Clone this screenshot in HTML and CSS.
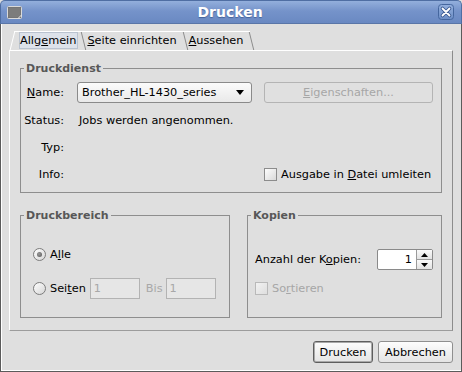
FILE: index.html
```html
<!DOCTYPE html>
<html lang="de">
<head>
  <meta charset="UTF-8" />
  <title>Drucken</title>
  <link rel="stylesheet" href="styles.css">
</head>
<body>
  <div class="window">
    <div class="titlebar">
      <svg class="win-icon" width="15" height="13" viewBox="0 0 15 13">
        <rect x="0.5" y="0.5" width="14" height="12" rx="1" fill="#6f6f6f" stroke="#d9d9d9"/>
        <rect x="1.5" y="1.5" width="12" height="10" fill="#7c7c7c"/>
        <path d="M11 12.5 L14.5 9" stroke="#e8e8e8" stroke-width="1"/>
      </svg>
      <span class="title">Drucken</span>
      <svg class="close-btn" width="16" height="16" viewBox="0 0 16 16">
        <defs>
          <linearGradient id="cg" x1="0" y1="0" x2="0" y2="1">
            <stop offset="0" stop-color="#93afdd"/>
            <stop offset="1" stop-color="#6d8ec6"/>
          </linearGradient>
        </defs>
        <rect x="0.5" y="0.5" width="15" height="15" rx="3" fill="url(#cg)" stroke="#45669e"/>
        <path d="M4.5 4.5 L11.5 11.5 M11.5 4.5 L4.5 11.5" stroke="#3a5890" stroke-width="3.6" stroke-linecap="round"/>
        <path d="M4.5 4.5 L11.5 11.5 M11.5 4.5 L4.5 11.5" stroke="#ffffff" stroke-width="1.8" stroke-linecap="round"/>
      </svg>
    </div>

    <div class="client">
      <div class="tabs">
        <div class="tab first"><span class="focus">Allg<u>e</u>mein</span></div>
        <div class="tab"><span><u>S</u>eite einrichten</span></div>
        <div class="tab"><span><u>A</u>ussehen</span></div>
      </div>

      <div class="panel">
        <fieldset class="group">
          <legend>Druckdienst</legend>
          <div class="service-grid">
            <span class="label"><u>N</u>ame:</span>
            <div class="combo">
              <span>Brother_HL-1430_series</span>
              <svg width="8" height="5" viewBox="0 0 8 5"><path d="M0 0 H8 L4 5 Z" fill="#000"/></svg>
            </div>
            <div class="btn disabled"><u>E</u>igenschaften...</div>

            <span class="label">Status:</span>
            <span class="value">Jobs werden angenommen.</span>
            <span></span>

            <span class="label">Typ:</span>
            <span></span>
            <span></span>

            <span class="label">Info:</span>
            <span></span>
            <label class="check">
              <span class="box"></span>
              <span>Ausgabe in <u>D</u>atei umleiten</span>
            </label>
          </div>
        </fieldset>

        <div class="lower">
          <fieldset class="group range">
            <legend>Druckbereich</legend>
            <div class="range-body">
              <label class="radio-row">
                <span class="radio checked"></span>
                <span>A<u>l</u>le</span>
              </label>
              <div class="radio-row">
                <span class="radio"></span>
                <span class="seiten">Sei<u>t</u>en</span>
                <span class="field">1</span>
                <span class="muted">Bis</span>
                <span class="field">1</span>
              </div>
            </div>
          </fieldset>

          <fieldset class="group copies">
            <legend>Kopien</legend>
            <div class="copies-body">
              <div class="copies-row">
                <span>Anzahl der K<u>o</u>pien:</span>
                <div class="spinner">
                  <span class="spin-value">1</span>
                  <div class="spin-buttons">
                    <span><svg width="7" height="4" viewBox="0 0 7 4"><path d="M0 4 H7 L3.5 0 Z" fill="#000"/></svg></span>
                    <span><svg width="7" height="4" viewBox="0 0 7 4"><path d="M0 0 H7 L3.5 4 Z" fill="#000"/></svg></span>
                  </div>
                </div>
              </div>
              <label class="check disabled">
                <span class="box"></span>
                <span>So<u>r</u>tieren</span>
              </label>
            </div>
          </fieldset>
        </div>
      </div>

      <div class="actions">
        <button class="btn default">Drucken</button>
        <button class="btn">Abbrechen</button>
      </div>
    </div>
  </div>
</body>
</html>
```

FILE: styles.css
```css
body {
  margin: 0;
  font-family: "DejaVu Sans", sans-serif;
  font-size: 11.3px;
  color: #000;
  background-color: #dfdfdf;
}

.window {
  width: 462px;
  height: 372px;
  display: flex;
  flex-direction: column;
  background-color: #dfdfdf;
}

.titlebar {
  height: 24px;
  flex: none;
  box-sizing: border-box;
  display: flex;
  align-items: center;
  padding: 0 7px 0 6px;
  background: linear-gradient(#93afdc, #7593ca 45%, #6a89c2);
  border: 1px solid #4f6ea3;
  border-bottom-color: #5a76a8;
  border-radius: 5px 5px 0 0;
}

.win-icon {
  flex: none;
}

.title {
  flex: 1;
  text-align: center;
  color: #fff;
  font-weight: bold;
  font-size: 14px;
  text-shadow: 0 1px 1px #44639a;
}

.close-btn {
  flex: none;
}

.client {
  flex: 1;
  display: flex;
  flex-direction: column;
  padding: 7px 8px 0 8px;
  border: 1px solid #5b5b5b;
  border-top: none;
  box-shadow: inset 1px 0 #fff, inset 0 -1px #fff;
}

/* tabs */
.tabs {
  display: flex;
  height: 19px;
}

.tab {
  position: relative;
  display: flex;
  align-items: center;
  padding: 0 7px 0 5px;
}

.tab::before {
  content: "";
  position: absolute;
  left: 0;
  right: 0;
  top: 0;
  bottom: 0;
  border-top: 1px solid #fff;
}

.tab::after {
  content: "";
  position: absolute;
  right: -2px;
  top: 1px;
  bottom: 0;
  width: 4px;
  border-right: 1px solid #8c8c8c;
  transform: skewX(14deg);
}

.tab.first {
  margin-left: 3px;
  padding: 0 4px 0 7px;
}

.tab.first::before {
  border-left: 1px solid #fff;
  transform: skewX(-14deg);
}

.tab .focus {
  padding: 1px 1px 1px 0;
  border: 1px solid #bac3d0;
  background-color: #dde2ea;
}

.tab span {
  position: relative;
  z-index: 1;
}

.panel {
  height: 281px;
  box-sizing: border-box;
  padding: 11px 10px 0 10px;
  border-top: 1px solid #fff;
  border-left: 1px solid #fff;
  border-right: 1px solid #8c8c8c;
  border-bottom: 1px solid #9c9c9c;
}

/* group boxes */
.group {
  margin: 0;
  padding: 0;
  min-width: 0;
  border: 1px solid #8e8e8e;
}

.group legend {
  margin-left: 3px;
  padding: 0 2px;
  font-size: 11px;
  font-weight: bold;
  color: #575757;
  line-height: 13px;
}

.service-grid {
  display: grid;
  grid-template-columns: 37px 174px 1fr;
  grid-template-rows: 21px 20px 20px 20px;
  column-gap: 14px;
  row-gap: 7px;
  align-items: center;
  padding: 7px 8px 8px 6px;
}

.service-grid > :nth-child(3n) {
  margin-left: -2px;
}

.label {
  justify-self: end;
}

.value {
  padding-left: 1px;
}

.combo {
  height: 21px;
  box-sizing: border-box;
  margin-left: -1px;
  display: flex;
  align-items: center;
  justify-content: space-between;
  padding: 0 7px 0 4px;
  background: linear-gradient(#fbfbfb, #e9e9e9);
  border: 1px solid #8a8a8a;
  border-radius: 3px;
}

.btn {
  height: 22px;
  box-sizing: border-box;
  display: flex;
  align-items: center;
  justify-content: center;
  font-family: "DejaVu Sans", sans-serif;
  font-size: 11.3px;
  color: #000;
  background: linear-gradient(#fdfdfd, #e4e4e4);
  border: 1px solid #8f8f8f;
  border-radius: 3px;
  padding: 0;
}

.btn.disabled {
  height: 21px;
  color: #a6a6a6;
  background: #e0e0e0;
  border-color: #b4b4b4;
}

.check {
  display: flex;
  align-items: center;
  gap: 4px;
}

.box {
  width: 13px;
  height: 13px;
  box-sizing: border-box;
  border: 1px solid #8c8c8c;
  background: linear-gradient(135deg, #fdfdfd, #d9d9d9);
}

.check.disabled {
  color: #a6a6a6;
}

.check.disabled .box {
  border-color: #b9b9b9;
  background: linear-gradient(135deg, #f2f2f2, #dedede);
}

.lower {
  display: flex;
  gap: 17px;
  margin-top: 16px;
}

.range {
  width: 210px;
  flex: none;
  box-sizing: border-box;
}

.copies {
  flex: 1;
}

.range-body {
  display: flex;
  flex-direction: column;
  gap: 14px;
  padding: 22px 0 18px 12px;
}

.radio-row {
  display: flex;
  align-items: center;
  height: 20px;
}

.radio-row + .radio-row {
  height: 21px;
}

.radio {
  width: 13px;
  height: 13px;
  box-sizing: border-box;
  margin-right: 4px;
  border: 1px solid #7c7c7c;
  border-radius: 50%;
  background: linear-gradient(135deg, #fefefe, #d6d6d6);
  display: flex;
  align-items: center;
  justify-content: center;
}

.radio.checked::after {
  content: "";
  width: 5px;
  height: 5px;
  border-radius: 50%;
  background: radial-gradient(circle at 40% 40%, #9a9a9a, #555);
}

.seiten {
  margin-right: 4px;
}

.field {
  width: 50px;
  height: 21px;
  box-sizing: border-box;
  padding-left: 3px;
  display: flex;
  align-items: center;
  color: #a8a8a8;
  background-color: #e6e6e6;
  border: 1px solid #b3b3b3;
}

.muted {
  color: #a8a8a8;
  margin: 0 3px 0 6px;
}

.copies-body {
  display: flex;
  flex-direction: column;
  gap: 12px;
  padding: 27px 8px 22px 7px;
}

.copies-row {
  display: flex;
  align-items: center;
  justify-content: space-between;
}

.spinner {
  width: 56px;
  height: 21px;
  box-sizing: border-box;
  display: flex;
  border: 1px solid #8a8a8a;
  border-radius: 2px;
  background-color: #fff;
}

.spin-value {
  flex: 1;
  text-align: right;
  padding-right: 4px;
  line-height: 19px;
}

.spin-buttons {
  width: 15px;
  display: flex;
  flex-direction: column;
  border-left: 1px solid #9a9a9a;
}

.spin-buttons span {
  flex: 1;
  display: flex;
  align-items: center;
  justify-content: center;
  background: linear-gradient(#fafafa, #e2e2e2);
}

.spin-buttons span + span {
  border-top: 1px solid #9a9a9a;
}

.actions {
  display: flex;
  justify-content: flex-end;
  gap: 5px;
  margin-top: 10px;
}

.actions .btn:first-child {
  width: 60px;
}

.actions .btn {
  width: 75px;
}

.btn.default {
  border-color: #5e5e5e;
  box-shadow: inset 0 0 0 1px #a9a9a9;
}
```
